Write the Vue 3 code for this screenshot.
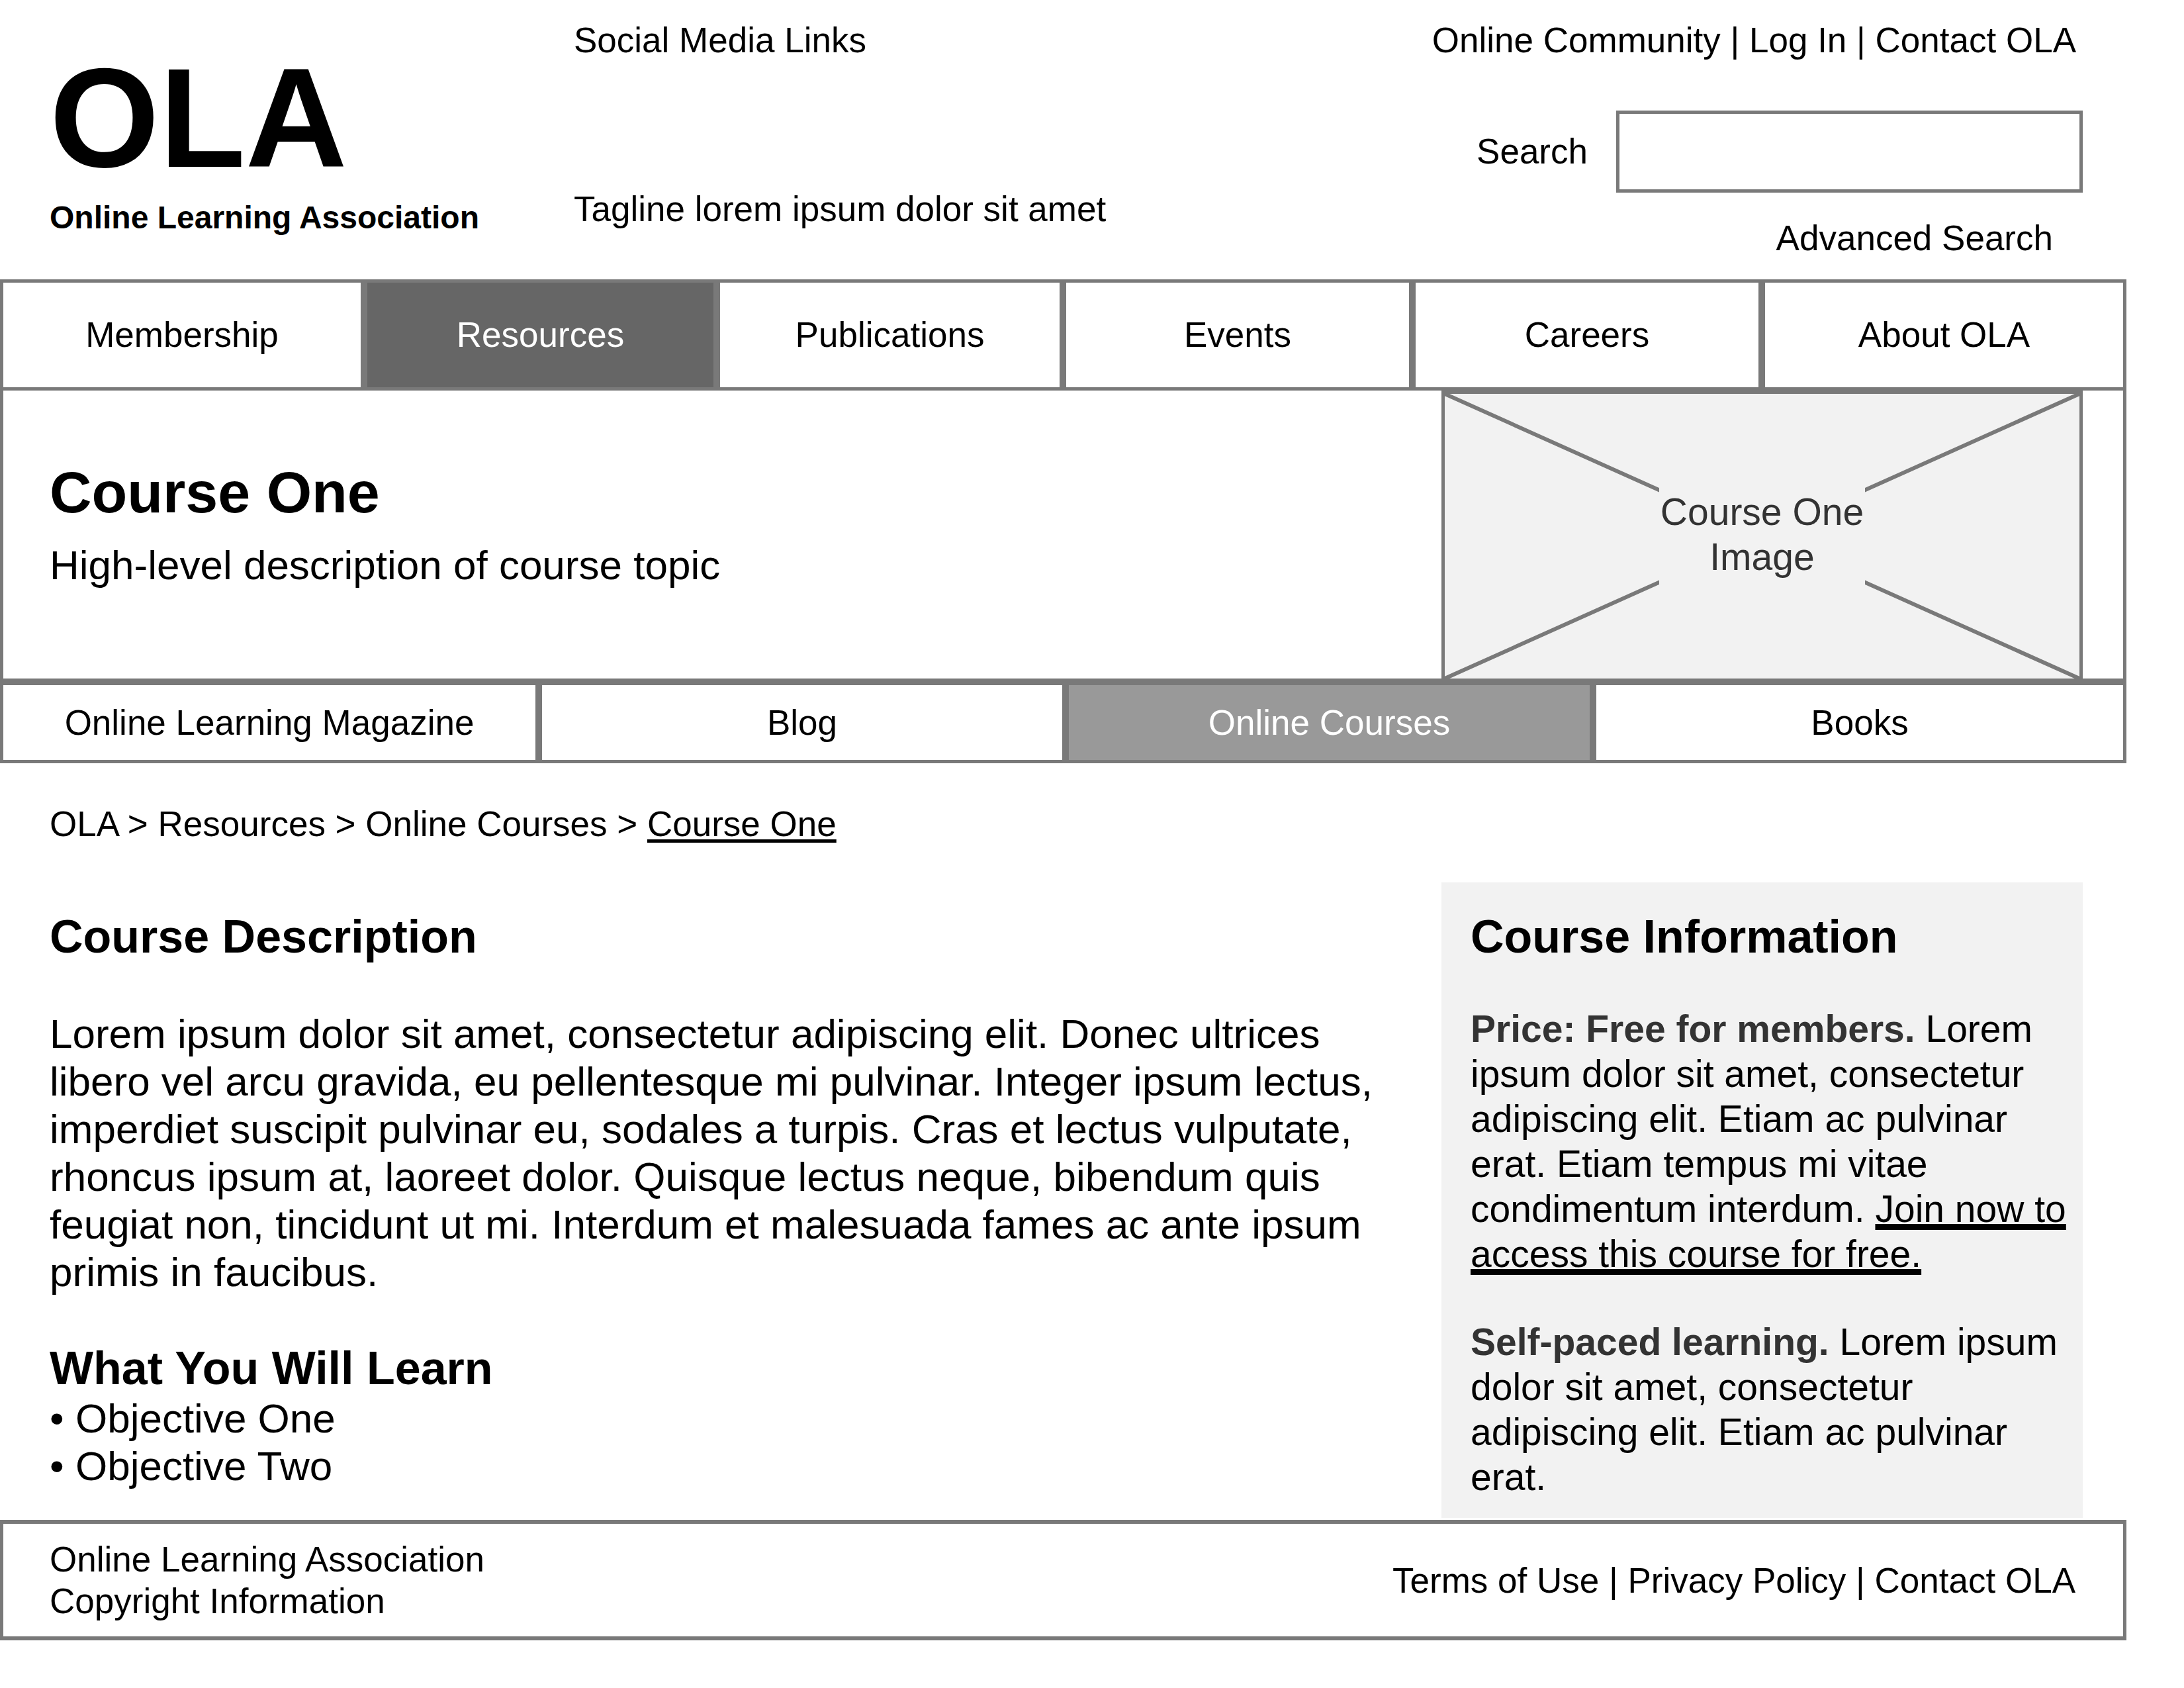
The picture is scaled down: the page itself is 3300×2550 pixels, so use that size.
<script setup>
import { ref } from 'vue'

const query = ref('')

const mainNav = [
  { label: 'Membership' },
  { label: 'Resources', active: true },
  { label: 'Publications' },
  { label: 'Events' },
  { label: 'Careers' },
  { label: 'About OLA' },
]

const subNav = [
  { label: 'Online Learning Magazine' },
  { label: 'Blog' },
  { label: 'Online Courses', active: true },
  { label: 'Books' },
]

const objectives = ['Objective One', 'Objective Two']
</script>

<template>
  <div class="page">
    <header class="header">
      <div class="brand">
        <a href="#" class="logo">OLA</a>
        <p class="brand-name">Online Learning Association</p>
      </div>
      <div class="intro">
        <p>Social Media Links</p>
        <p>Tagline lorem ipsum dolor sit amet</p>
      </div>
      <div class="tools">
        <p class="utility">
          <a href="#">Online Community</a> | <a href="#">Log In</a> | <a href="#">Contact OLA</a>
        </p>
        <form class="search" @submit.prevent>
          <label for="search">Search</label>
          <input id="search" v-model="query" type="text" />
        </form>
        <a href="#" class="advanced">Advanced Search</a>
      </div>
    </header>

    <nav class="nav main-nav" aria-label="Main">
      <a v-for="item in mainNav" :key="item.label" href="#" :class="{ active: item.active }">{{ item.label }}</a>
    </nav>

    <section class="hero">
      <div class="hero-text">
        <h1>Course One</h1>
        <p>High-level description of course topic</p>
      </div>
      <div class="hero-image">
        <svg viewBox="0 0 100 100" preserveAspectRatio="none" aria-hidden="true">
          <path d="M0 0L100 100M100 0L0 100" vector-effect="non-scaling-stroke" />
        </svg>
        <p>Course One<br />Image</p>
      </div>
    </section>

    <nav class="nav sub-nav" aria-label="Resources">
      <a v-for="item in subNav" :key="item.label" href="#" :class="{ active: item.active }">{{ item.label }}</a>
    </nav>

    <nav class="breadcrumb" aria-label="Breadcrumb">
      <a href="#">OLA</a> &gt; <a href="#">Resources</a> &gt; <a href="#">Online Courses</a> &gt;
      <a href="#" class="current">Course One</a>
    </nav>

    <div class="content">
      <main class="course">
        <h2>Course Description</h2>
        <p>
          Lorem ipsum dolor sit amet, consectetur adipiscing elit. Donec ultrices libero vel arcu gravida, eu
          pellentesque mi pulvinar. Integer ipsum lectus, imperdiet suscipit pulvinar eu, sodales a turpis. Cras et
          lectus vulputate, rhoncus ipsum at, laoreet dolor. Quisque lectus neque, bibendum quis feugiat non,
          tincidunt ut mi. Interdum et malesuada fames ac ante ipsum primis in faucibus.
        </p>
        <h2>What You Will Learn</h2>
        <ul>
          <li v-for="objective in objectives" :key="objective">• {{ objective }}</li>
        </ul>
      </main>
      <aside class="info">
        <h2>Course Information</h2>
        <p>
          <strong>Price: Free for members.</strong> Lorem ipsum dolor sit amet, consectetur adipiscing elit. Etiam ac
          pulvinar erat. Etiam tempus mi vitae condimentum interdum.
          <a href="#">Join now to access this course for free.</a>
        </p>
        <p>
          <strong>Self-paced learning.</strong> Lorem ipsum dolor sit amet, consectetur adipiscing elit. Etiam ac
          pulvinar erat.
        </p>
      </aside>
    </div>

    <footer class="footer">
      <p>Online Learning Association<br />Copyright Information</p>
      <p>
        <a href="#">Terms of Use</a> | <a href="#">Privacy Policy</a> | <a href="#">Contact OLA</a>
      </p>
    </footer>
  </div>
</template>

<style>
body {
  margin: 0;
  background: #fff;
}
</style>

<style scoped>
.page {
  --line: #797979;
  --panel: #f2f2f2;
  margin-right: 87px;
  color: #000;
  font-family: "Liberation Sans", Arial, Helvetica, sans-serif;
  font-size: 53px;
  line-height: 60px;
}

.page * {
  box-sizing: border-box;
}

h1,
h2,
p,
ul {
  margin: 0;
  padding: 0;
}

a {
  color: inherit;
  text-decoration: none;
}

/* Header */
.header {
  display: grid;
  grid-template-columns: 792px 1fr auto;
  min-height: 422px;
  padding: 31px 66px 31px 75px;
}

.brand {
  padding-top: 42px;
}

.logo {
  display: block;
  font-size: 213px;
  font-weight: bold;
  line-height: 210px;
}

.brand-name {
  margin-top: 16px;
  font-size: 48px;
  font-weight: bold;
}

.intro {
  display: flex;
  flex-direction: column;
  gap: 195px;
}

.tools {
  display: flex;
  flex-direction: column;
  align-items: flex-end;
}

.utility {
  padding-right: 10px;
}

.search {
  display: flex;
  align-items: center;
  gap: 43px;
  margin-top: 76px;
}

.search input {
  width: 705px;
  height: 124px;
  padding: 0 24px;
  border: 5px solid var(--line);
  border-radius: 0;
  background: #fff;
  font: inherit;
}

.advanced {
  margin-top: 39px;
  padding-right: 45px;
}

/* Navigation bars */
.nav {
  display: grid;
}

.nav a {
  display: flex;
  align-items: center;
  justify-content: center;
  border: 5px solid var(--line);
}

.main-nav {
  grid-template-columns: 550fr 533fr 523fr 528fr 528fr 551fr;
}

.main-nav a {
  height: 168px;
}

.main-nav .active {
  background: #666;
  color: #fff;
}

.sub-nav {
  grid-template-columns: 814fr 796fr 797fr 806fr;
}

.sub-nav a {
  height: 123px;
}

.sub-nav .active {
  background: #999;
  color: #fff;
}

/* Hero */
.hero {
  display: flex;
  justify-content: space-between;
  min-height: 440px;
  padding: 0 61px 0 70px;
  border: 5px solid var(--line);
  border-top: 0;
}

.hero-text {
  padding-top: 104px;
}

.hero-text h1 {
  font-size: 88px;
  line-height: 100px;
}

.hero-text p {
  margin-top: 24px;
  font-size: 62px;
  line-height: 72px;
}

.hero-image {
  display: grid;
  place-items: center;
  width: 969px;
  border: 5px solid var(--line);
  border-bottom: 0;
  background: var(--panel);
}

.hero-image > * {
  grid-area: 1 / 1;
}

.hero-image svg {
  display: block;
  width: 100%;
  height: 430px;
  fill: none;
  stroke: var(--line);
  stroke-width: 6;
}

.hero-image p {
  z-index: 1;
  padding: 4px 2px 10px;
  background: var(--panel);
  color: #333;
  font-size: 57px;
  line-height: 68px;
  text-align: center;
}

/* Breadcrumb */
.breadcrumb {
  padding: 62px 75px 58px;
}

.breadcrumb .current {
  text-decoration: underline;
  text-decoration-thickness: 5px;
  text-underline-offset: 5px;
  text-decoration-skip-ink: none;
}

/* Content */
.content {
  display: grid;
  grid-template-columns: 1fr 969px;
  gap: 68px;
  padding: 0 66px 3px 75px;
}

h2 {
  font-size: 70px;
  line-height: 80px;
}

.course {
  padding-top: 42px;
  font-size: 62px;
  line-height: 72px;
}

.course p {
  margin: 71px 0 69px;
}

.course ul {
  list-style: none;
}

.info {
  padding: 42px 12px 28px 44px;
  background: var(--panel);
  font-size: 57px;
  line-height: 68px;
}

.info p {
  margin-top: 65px;
}

.info strong {
  color: #333;
}

.info a {
  text-decoration: underline;
  text-decoration-thickness: 9px;
  text-underline-offset: 3px;
  text-decoration-skip-ink: none;
}

/* Footer */
.footer {
  display: flex;
  align-items: center;
  justify-content: space-between;
  padding: 22px 72px 22px 70px;
  border: solid var(--line);
  border-width: 6px 5px;
  line-height: 63px;
}
</style>
